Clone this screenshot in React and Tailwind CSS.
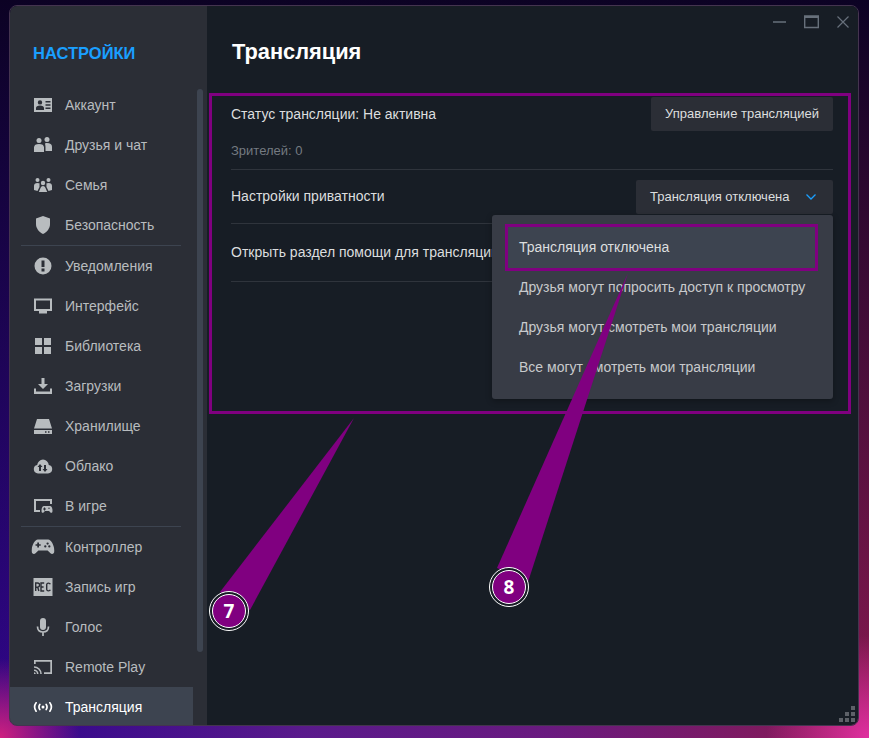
const F = "currentColor";
const icons = {
  account: <svg viewBox="0 0 20 20" className="w-5 h-5"><path fillRule="evenodd" fill={F} d="M1 3h18v14H1zM7 5.200a2.200 2.200 0 100 4.400 2.200 2.200 0 000-4.400zM3 15h8v-2c0-1.500-1.500-2.500-4-2.500S3 11.500 3 13zM12.500 6v1.500h5V6zm0 3.200v1.500h5V9.200zm0 3.200v1.500h5v-1.500z"/></svg>,
  friends: <svg viewBox="0 0 20 20" className="w-5 h-5"><g fill={F}><circle cx="6" cy="5.500" r="2.500"/><circle cx="14" cy="4.500" r="2.500"/><path d="M1 17v-4.500C1 10 3 9 6 9s5 1 5 3.500V17zM12 8.500c.8-.3 1.300-.4 2-.4 3 0 5 1.200 5 3.600V16h-6.500v-3.500c0-1.700-.3-2.800-.5-4z"/></g></svg>,
  family: <svg viewBox="0 0 20 20" className="w-5 h-5"><g fill={F}><circle cx="4.500" cy="5" r="2"/><circle cx="15.500" cy="5" r="2"/><circle cx="10" cy="8" r="2.200"/><path d="M1 15v-4c0-2 1.200-3 3.500-3 1 0 1.700.2 2.200.6C6.300 9.500 6.600 11 6.500 12L4.500 16zM19 15v-4c0-2-1.200-3-3.500-3-1 0-1.700.2-2.200.6.400.9.100 2.400.2 3.400l2 4zM5.800 17l1.700-4c.5-1.300 1.300-2 2.500-2s2 .7 2.500 2l1.700 4z"/></g></svg>,
  shield: <svg viewBox="0 0 20 20" className="w-5 h-5"><path fill={F} d="M10 1l7 2.500V9c0 4.500-3 8-7 10-4-2-7-5.500-7-10V3.500z"/></svg>,
  alert: <svg viewBox="0 0 20 20" className="w-5 h-5"><path fillRule="evenodd" fill={F} d="M10 1.500a8.500 8.500 0 100 17 8.500 8.500 0 000-17zM8.500 4.500h3v6.500h-3zM8.500 12.500h3v3h-3z"/></svg>,
  monitor: <svg viewBox="0 0 20 20" className="w-5 h-5"><path fillRule="evenodd" fill={F} d="M1 2.500h18v12.500h-5v2.500H6V15H1zM3 4.500V13h14V4.500z"/></svg>,
  library: <svg viewBox="0 0 20 20" className="w-5 h-5"><g fill={F}><rect x="2" y="2" width="7" height="7"/><rect x="11" y="2" width="7" height="7"/><rect x="2" y="11" width="7" height="7"/><rect x="11" y="11" width="7" height="7"/></g></svg>,
  download: <svg viewBox="0 0 20 20" className="w-5 h-5"><path fill={F} d="M8.500 2h3v6H15l-5 5-5-5h3.500zM1 12.500h2V15.500h14v-3h2V18H1z"/></svg>,
  storage: <svg viewBox="0 0 20 20" className="w-5 h-5"><path fillRule="evenodd" fill={F} d="M4 3h12l3 9.500H1zM1 14h18v4H1zM12 15.200v1.600h1.500v-1.600zm3 0v1.600h1.500v-1.600z"/></svg>,
  cloud: <svg viewBox="0 0 20 20" className="w-5 h-5"><path fillRule="evenodd" fill={F} d="M5 17.500a4.300 4.300 0 01-.8-8.500A6 6 0 0110 3.500 6 6 0 0115.800 9a4.300 4.300 0 01-.8 8.500zM7 8L4.500 11H6v4h2v-4h1.500zM11 9v4H9.500L12 16l2.500-3H13V9z"/></svg>,
  ingame: <svg viewBox="0 0 20 20" className="w-5 h-5"><path fill={F} d="M1 3h18v5h-2V5H3v9h4v2H1z"/><path fill={F} fillRule="evenodd" d="M11 10h6c1.500 0 2.500 2 2.500 5 0 2-1.500 2.500-2.500 1l-1-1h-4l-1 1c-1 1.500-2.500 1-2.500-1 0-3 1-5 2.500-5zM11 11.500v1h-1v1h1v1h1v-1h1v-1h-1v-1zM16 11.500a.7.700 0 100 1.400.7.700 0 000-1.400z"/></svg>,
  controller: <svg viewBox="0 0 20 20" className="w-5 h-5 scale-[1.15]"><path fillRule="evenodd" fill={F} d="M5.500 3.500h9C17 3.500 19.500 8 20 13c.2 2.500-2 4-3.500 2.500L14 13H6l-2.500 2.500C2 17 -.2 15.500 0 13 .5 8 3 3.500 5.500 3.500zM5 6v1.500H3.500V9H5v1.500h1.500V9H8V7.500H6.500V6zM14 6a1 1 0 100 2 1 1 0 000-2zm-2 2.500a1 1 0 100 2 1 1 0 000-2zm3.500 0a1 1 0 100 2 1 1 0 000-2z"/></svg>,
  rec: <svg viewBox="0 0 20 20" className="w-5 h-5"><rect x="0.500" y="1" width="19" height="18" fill={F}/><g fill="none" stroke="#2b2e36" strokeWidth="1.400"><path d="M2.700 14V6h1.800a1.500 1.500 0 010 4.200H2.700M4.700 10.200L5.900 14"/><path d="M11.200 6H8v8h3.200M8 10h2.600"/><path d="M17.300 7.200C16.900 6 14 5.500 13.700 7.500v5c.3 2 3.200 1.500 3.600.3"/></g></svg>,
  mic: <svg viewBox="0 0 20 20" className="w-5 h-5"><path fill={F} d="M10 1a3 3 0 013 3v6a3 3 0 01-6 0V4a3 3 0 013-3z"/><path fill="none" stroke={F} strokeWidth="1.700" d="M4.500 9.500c0 3.500 2.300 5.500 5.500 5.500s5.500-2 5.500-5.500M10 15v4"/></svg>,
  cast: <svg viewBox="0 0 20 20" className="w-5 h-5"><path fill={F} d="M1 3h18v14h-8v-1.700h6.300V4.700H2.700V7H1z"/><path fill={F} d="M1 9.200a7.800 7.800 0 017.800 7.800H7.200A6.200 6.200 0 001 10.800zM1 12.500A4.500 4.500 0 015.500 17H3.900A2.900 2.900 0 001 14.100zM1 15.200A1.800 1.800 0 012.800 17H1z"/></svg>,
  broadcast: <svg viewBox="0 0 20 20" className="w-5 h-5"><circle cx="10" cy="10" r="1.500" fill={F}/><path fill="none" stroke={F} strokeWidth="1.700" strokeLinecap="round" d="M6.800 7.500c-1.100 1.600-1.100 3.400 0 5M13.200 7.500c1.100 1.600 1.100 3.400 0 5M3.100 5.800c-2 2.800-2 5.600 0 8.400M16.900 5.800c2 2.800 2 5.600 0 8.400"/></svg>,
};

function Item({ icon, label, active }) {
  return (
    <div className={`flex items-center h-10 pl-[23px] gap-3 w-[183px] ${active ? "bg-[#3d4450] text-white" : "text-[#b8bcbf]"}`}>
      <span className={`flex items-center justify-center ${active ? "text-white" : "text-[#b8bcbf]"}`}>{icons[icon]}</span>
      <span className="text-[14px] leading-none">{label}</span>
    </div>
  );
}
const Sep = () => <div className="h-px bg-[#3d4450] ml-[11px] w-[160px]" />;

function Badge({ n, className }) {
  return (
    <div className={`absolute w-10 h-10 rounded-full bg-[#171d25] border border-white flex items-center justify-center ${className}`}>
      <div className="w-[34px] h-[34px] rounded-full bg-[#800080] border border-white text-white font-bold text-[19px] flex items-center justify-center font-['Noto_Sans',sans-serif]">{n}</div>
    </div>
  );
}

export default function App() {
  return (
    <div className="relative h-[738px] w-[869px] overflow-hidden pl-[9px] pt-[5px] font-['Liberation_Sans',Arial,sans-serif] bg-[radial-gradient(circle_at_100%_100%,#e030a0_0%,transparent_9%),radial-gradient(circle_at_0%_100%,#d02080_0%,transparent_7%),linear-gradient(180deg,#0c0224_0%,rgba(12,2,36,0)_100%),linear-gradient(90deg,#30068c_0%,#5a1a8c_35%,#6a1a80_63%,#8a1a50_100%)]">
      <div className="flex w-[848px] h-[719px] rounded-lg overflow-hidden border border-[#44344f] box-content">
        <aside className="w-[197px] bg-[#2b2e36] shrink-0 relative">
          <div className="h-[79px] pt-[37px] pl-[23px] text-[#1a9fff] font-bold text-[16.500px] leading-5">НАСТРОЙКИ</div>
          <Item icon="account" label="Аккаунт" />
          <Item icon="friends" label="Друзья и чат" />
          <Item icon="family" label="Семья" />
          <Item icon="shield" label="Безопасность" />
          <Sep />
          <Item icon="alert" label="Уведомления" />
          <Item icon="monitor" label="Интерфейс" />
          <Item icon="library" label="Библиотека" />
          <Item icon="download" label="Загрузки" />
          <Item icon="storage" label="Хранилище" />
          <Item icon="cloud" label="Облако" />
          <Item icon="ingame" label="В игре" />
          <Sep />
          <Item icon="controller" label="Контроллер" />
          <Item icon="rec" label="Запись игр" />
          <Item icon="mic" label="Голос" />
          <Item icon="cast" label="Remote Play" />
          <Item icon="broadcast" label="Трансляция" active />
          <div className="absolute left-[187px] top-[83px] w-[6px] h-[563px] rounded bg-[#3d4450]" />
        </aside>
        <main className="relative flex-1 bg-[#171d25] pl-[24px] pr-[25px]">
          <div className="absolute top-[9px] right-[8px] flex items-center gap-[17px] text-[#67707b]">
            <svg width="15" height="14" viewBox="0 0 15 14"><path d="M1 7h13" stroke="currentColor" strokeWidth="1.400" /></svg>
            <svg width="15" height="14" viewBox="0 0 15 14"><path d="M.7 1h13.600v11.500H.7zM.7 2.200h13.600" fill="none" stroke="currentColor" strokeWidth="1.400" /></svg>
            <svg width="14" height="14" viewBox="0 0 14 14"><path d="M1.500 1.500l11 11M12.500 1.500l-11 11" stroke="currentColor" strokeWidth="1.200" /></svg>
          </div>
          <h1 className="pt-[34px] ml-px text-[21.800px] leading-[24px] font-bold text-white">Трансляция</h1>

          <div className="mt-[33px]">
            <div className="flex items-center justify-between h-[34px] text-[#dcdedf] text-[14px]">
              <span>Статус трансляции: Не активна</span>
              <button className="h-[34px] w-[182px] rounded-[2px] bg-[#2b2e36] text-[13px] text-[#dcdedf] font-medium">Управление трансляцией</button>
            </div>
            <div className="pt-[10px] h-[39px] text-[13px] leading-[20px] text-[#747a81] border-b border-[#2f343c]">Зрителей: 0</div>
            <div className="flex items-center justify-between h-[54px] text-[#dcdedf] text-[14px] border-b border-[#2f343c]">
              <span>Настройки приватности</span>
              <div className="h-[34px] w-[197px] rounded-[2px] bg-[#2b2e36] flex items-center pl-[14px] gap-[15px] text-[13px]">
                <span>Трансляция отключена</span>
                <svg width="12" height="8" viewBox="0 0 12 8"><path d="M1.500 1.500L6 6l4.500-4.500" fill="none" stroke="#1a9fff" strokeWidth="1.300"/></svg>
              </div>
            </div>
            <div className="flex items-center h-[58px] text-[#dcdedf] text-[14px] border-b border-[#2f343c] whitespace-nowrap overflow-hidden">
              Открыть раздел помощи для трансляций
            </div>
          </div>

          <div className="absolute left-[285px] top-[209px] w-[341px] h-[184px] rounded-[3px] bg-[#383c46] pt-[11px] pl-[13px] pr-[15px] text-[#c8cacc] text-[14px] shadow-[0_2px_6px_rgba(0,0,0,0.3)]">
            <div className="flex items-center h-[42px] pl-[14px] text-[#dcdedf] bg-[#3d4450]">Трансляция отключена</div>
            <div className="flex items-center h-10 pl-[14px] -mt-[1px]">Друзья могут попросить доступ к просмотру</div>
            <div className="flex items-center h-10 pl-[14px]">Друзья могут смотреть мои трансляции</div>
            <div className="flex items-center h-10 pl-[14px]">Все могут смотреть мои трансляции</div>
          </div>

          <div className="absolute right-[3px] bottom-[3px] grid grid-cols-3 gap-[2px] w-[16px]">
            <i/><i/><b className="w-1 h-1 bg-[#5d6168]"/>
            <i/><b className="w-1 h-1 bg-[#5d6168]"/><b className="w-1 h-1 bg-[#5d6168]"/>
            <b className="w-1 h-1 bg-[#5d6168]"/><b className="w-1 h-1 bg-[#5d6168]"/><b className="w-1 h-1 bg-[#5d6168]"/>
          </div>
        </main>
      </div>

      <div className="absolute left-[209px] top-[93px] w-[642px] h-[321px] border-[3px] border-[#800080]" />
      <div className="absolute left-[505px] top-[224px] w-[313px] h-[47px] border-[3px] border-[#800080]" />
      <svg className="absolute left-0 top-0" width="869" height="738">
        <polygon points="354,418 220,592 250,610" fill="#800080" />
        <polygon points="628,273 497,568 528,582" fill="#800080" />
      </svg>
      <Badge n="7" className="left-[209px] top-[591px]" />
      <Badge n="8" className="left-[489px] top-[567px]" />
    </div>
  );
}
